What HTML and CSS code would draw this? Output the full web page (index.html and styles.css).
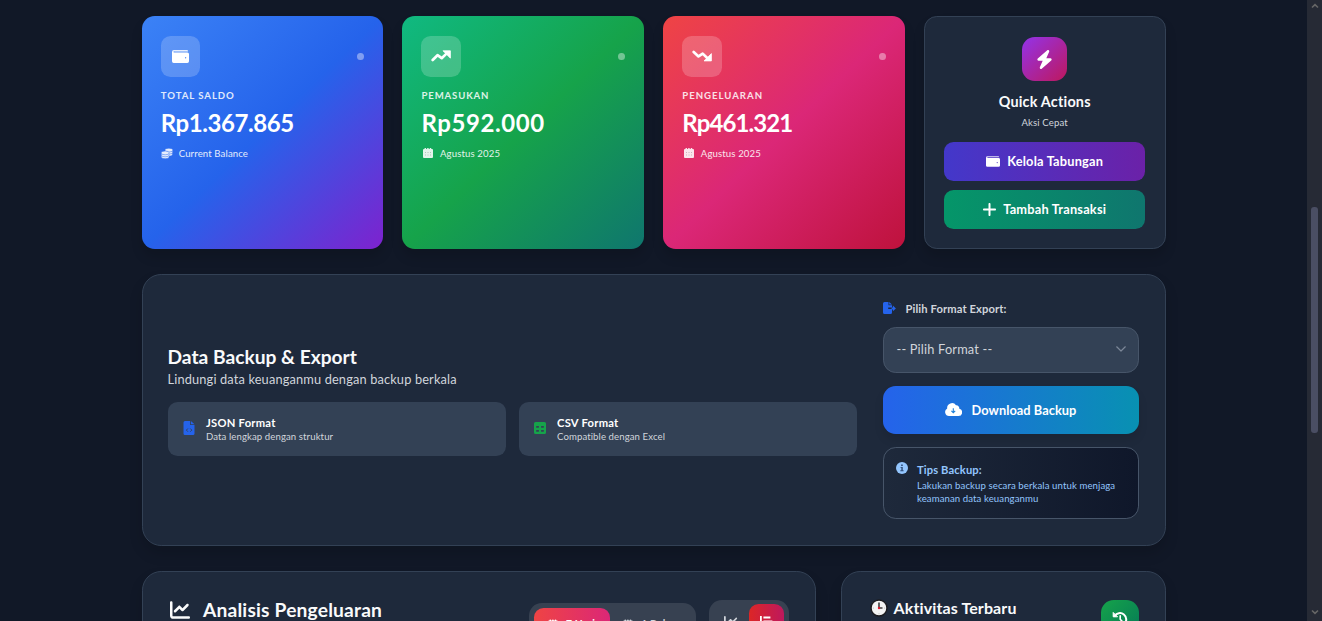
FILE: index.html
```
<!DOCTYPE html>
<html lang="id">
<head>
<meta charset="utf-8">
<title>Dashboard Keuangan</title>
<link rel="stylesheet" href="styles.css">
</head>
<body>
<svg class="defs" width="0" height="0">
  <symbol id="wallet" viewBox="0 0 17 13"><path opacity=".85" d="M1.8 0H15a1 1 0 0 1 1 1v.4H2.6A1 1 0 0 0 1.6 3H0V1.8A1.8 1.8 0 0 1 1.8 0z"/><path fill-rule="evenodd" d="M0 1.8 2 2.4H15.3A1.7 1.7 0 0 1 17 4.1v7.2a1.7 1.7 0 0 1-1.7 1.7H1.7A1.7 1.7 0 0 1 0 11.3zM13.6 7a.7.8 0 1 0 0 1.6.7.8 0 0 0 0-1.6z"/></symbol>
  <symbol id="calendar" viewBox="0 0 10 10"><path d="M1.500 1V.6a.8.7 0 0 1 1.600 0V1h1V.6a.8.7 0 0 1 1.600 0V1h1V.6a.8.7 0 0 1 1.600 0V1H9a1 1 0 0 1 1 1v7a1 1 0 0 1-1 1H1a1 1 0 0 1-1-1V2a1 1 0 0 1 1-1z"/><path fill="#000" opacity=".22" d="M2 4v1h1V4zm2.500 0v1h1V4zM7 4v1h1V4zM2 6.500v1h1v-1zm2.500 0v1h1v-1zM7 6.500v1h1v-1z"/></symbol>
  <symbol id="chart" viewBox="0 0 512 512"><path d="M64 64c0-17.7-14.3-32-32-32S0 46.3 0 64V400c0 44.2 35.8 80 80 80H480c17.7 0 32-14.3 32-32s-14.3-32-32-32H80c-8.8 0-16-7.2-16-16V64zm406.6 86.6c12.5-12.5 12.5-32.8 0-45.3s-32.8-12.5-45.3 0L320 210.7l-57.4-57.4c-12.5-12.5-32.8-12.5-45.3 0l-112 112c-12.5 12.5-12.5 32.8 0 45.3s32.8 12.5 45.3 0L240 221.3l57.4 57.4c12.5 12.5 32.8 12.5 45.3 0l128-128z"/></symbol>
</svg>

<main class="page">
  <section class="stats">
    <article class="stat blue">
      <div class="stat-top"><span class="tile"><svg width="17" height="13"><use href="#wallet"/></svg></span><i class="dot"></i></div>
      <div class="label">TOTAL SALDO</div>
      <div class="amount a1">Rp1.367.865</div>
      <div class="note"><svg width="12" height="11" viewBox="0 0 12 11"><g stroke="#2f6fee" stroke-width=".5"><ellipse cx="7.6" cy="6.3" rx="3.9" ry="1.9"/><ellipse cx="7.8" cy="4.2" rx="3.9" ry="1.9"/><ellipse cx="7.9" cy="2.1" rx="4" ry="1.9"/><ellipse cx="4.2" cy="8.8" rx="4" ry="1.9"/><ellipse cx="4.2" cy="6.9" rx="4" ry="1.9"/><ellipse cx="4.2" cy="4.9" rx="4" ry="1.9"/></g></svg>Current Balance</div>
    </article>
    <article class="stat green">
      <div class="stat-top"><span class="tile"><svg width="20" height="12" viewBox="0 0 20 12"><path d="M1.7 10 6.5 5.2 10.7 8.2 15.5 3.6" fill="none" stroke="currentColor" stroke-width="2.7" stroke-linecap="round" stroke-linejoin="round"/><path d="M12 .8h7.4v7.4z" stroke="currentColor" stroke-width=".8" stroke-linejoin="round"/></svg></span><i class="dot"></i></div>
      <div class="label l2">PEMASUKAN</div>
      <div class="amount a2">Rp592.000</div>
      <div class="note cal"><svg width="10" height="10"><use href="#calendar"/></svg>Agustus 2025</div>
    </article>
    <article class="stat red">
      <div class="stat-top"><span class="tile"><svg width="20" height="12" viewBox="0 0 20 12"><path d="M1.7 2 6.5 6.4 10.7 3.6 15.5 8.2" fill="none" stroke="currentColor" stroke-width="2.7" stroke-linecap="round" stroke-linejoin="round"/><path d="M12 10.9h7.4V3.6z" stroke="currentColor" stroke-width=".8" stroke-linejoin="round"/></svg></span><i class="dot"></i></div>
      <div class="label l3">PENGELUARAN</div>
      <div class="amount a3">Rp461.321</div>
      <div class="note cal"><svg width="10" height="10"><use href="#calendar"/></svg>Agustus 2025</div>
    </article>
    <article class="quick">
      <span class="bolt"><svg width="17" height="19" viewBox="16 0 416 512"><path d="M349.4 44.6c5.9-13.7 1.5-29.7-10.6-38.5s-28.6-8-39.9 1.8l-256 224C33 240.6 29.4 254.3 34 266.6s16.6 21.4 30 21.4H175.5L98.6 467.4c-5.9 13.7-1.5 29.7 10.6 38.5s28.6 8 39.9-1.8l256-224c10-8.8 13.6-22.4 8.9-34.9s-16.5-20.9-29.8-20.9H272.5L349.4 44.6z"/></svg></span>
      <h3>Quick Actions</h3>
      <p>Aksi Cepat</p>
      <button class="btn purple"><svg width="14" height="11"><use href="#wallet"/></svg>Kelola Tabungan</button>
      <button class="btn teal"><svg width="13" height="13" viewBox="16 48 416 416"><path d="M256 80c0-17.7-14.3-32-32-32s-32 14.3-32 32V224H48c-17.7 0-32 14.3-32 32s14.3 32 32 32H192V432c0 17.7 14.3 32 32 32s32-14.3 32-32V288H400c17.7 0 32-14.3 32-32s-14.3-32-32-32H256V80z"/></svg>Tambah Transaksi</button>
    </article>
  </section>

  <section class="panel export">
    <div class="info">
      <h2>Data Backup &amp; Export</h2>
      <p class="lead">Lindungi data keuanganmu dengan backup berkala</p>
      <div class="formats">
        <div class="format"><svg class="json" width="11" height="14" viewBox="0 0 11 14"><path d="M1.5 0H6.6V4H11v8.5a1.5 1.5 0 0 1-1.5 1.5h-8A1.5 1.5 0 0 1 0 12.500V1.500A1.500 1.500 0 0 1 1.500 0z"/><path d="M7.400 0 11 3.300H7.400z"/><path d="M4.400 7.500 2.900 9.100l1.500 1.600M6.800 7.500l1.500 1.600-1.500 1.600" fill="none" stroke="#334155" stroke-width=".9"/></svg><div><b>JSON Format</b><span>Data lengkap dengan struktur</span></div></div>
        <div class="format"><svg class="csv" width="12" height="12" viewBox="0 0 12 12"><path fill-rule="evenodd" d="M1.500 0h9A1.500 1.500 0 0 1 12 1.500v9a1.500 1.500 0 0 1-1.500 1.500h-9A1.500 1.500 0 0 1 0 10.500v-9A1.500 1.500 0 0 1 1.500 0zM2.200 4v1.700h2.700V4zm4.900 0v1.700h2.700V4zM2.200 8v1.800h2.700V8zm4.900 0v1.800h2.700V8z"/></svg><div><b>CSV Format</b><span>Compatible dengan Excel</span></div></div>
      </div>
    </div>
    <div class="side">
      <div class="pick"><svg width="13" height="12" viewBox="0 0 13 12"><path d="M1.500 0H5.500V3.200H9V5.400H5.200V7H9v3.500A1.500 1.500 0 0 1 7.500 12h-6A1.500 1.500 0 0 1 0 10.500v-9A1.500 1.500 0 0 1 1.500 0z"/><path d="M6.200 0 9 2.600H6.200zM8.600 5.400h1.300V3.600L12.900 6.500 9.900 9.200V7.500H8.600z"/></svg>Pilih Format Export:</div>
      <div class="select">-- Pilih Format --<svg width="10" height="6" viewBox="0 0 10 6"><path d="M.7.8 5 5 9.300.8" fill="none" stroke="#7c8798" stroke-width="1.200" stroke-linecap="round" stroke-linejoin="round"/></svg></div>
      <button class="download"><svg width="17" height="13" viewBox="0 0 17 13"><path d="M4 13A4 4 0 0 1 2.200 5.500 4.800 4.800 0 0 1 11 2.300 3 3 0 0 1 14.300 5.700 3.700 3.700 0 0 1 13.500 13z"/><path d="M8.300 5.200V9.300M6.400 7.800 8.300 9.700 10.200 7.800" stroke="#2080d8" stroke-width="1.100" fill="none"/></svg>Download Backup</button>
      <div class="tips">
        <svg width="12" height="12" viewBox="0 0 12 12"><circle cx="6" cy="6" r="6"/><path d="M5.100 2.500h1.700v1.400H5.100zM4.600 5h2.200v3.300h.8v1H4.300v-1h1V6h-.7z" fill="#33507c"/></svg>
        <div><b>Tips Backup:</b><p>Lakukan backup secara berkala untuk menjaga<br>keamanan data keuanganmu</p></div>
      </div>
    </div>
  </section>

  <section class="bottom">
    <div class="panel analysis">
      <h2><svg width="20" height="20"><use href="#chart"/></svg>Analisis Pengeluaran</h2>
      <div class="seg range"><span class="on"><svg width="10" height="11"><use href="#calendar"/></svg>7 Hari</span><span class="off"><svg width="10" height="11"><use href="#calendar"/></svg>1 Bulan</span></div>
      <div class="seg kind"><span class="off"><svg width="14" height="14"><use href="#chart"/></svg></span><span class="on"><svg width="13" height="14" viewBox="0 0 13 14"><path d="M0 1h1.800v12H0zM3.400 1.500h7v2h-7zM3.400 5.500h9v2h-9zM3.400 9.500h5v2h-5z"/></svg></span></div>
    </div>
    <div class="panel activity">
      <h3><svg width="18" height="18" viewBox="0 0 18 18"><circle cx="9" cy="9" r="8" fill="#f3f3f3" stroke="#1b1b1f" stroke-width="1.500"/><path d="M9 3.500V9" stroke="#222" stroke-width="1.400"/><path d="M9 9h3.500" stroke="#222" stroke-width="1.300"/><circle cx="9" cy="9" r="1.200" fill="#e0182d"/><g fill="#aaa"><circle cx="3.300" cy="9" r=".5"/><circle cx="14.700" cy="9" r=".5"/><circle cx="9" cy="14.700" r=".5"/></g></svg>Aktivitas Terbaru</h3>
      <span class="history"><svg width="16" height="16" viewBox="0 0 16 16"><g fill="none" stroke="currentColor" stroke-width="2" stroke-linecap="round" stroke-linejoin="round"><path d="M2.600 5A6.300 6.300 0 1 1 3 12.300"/><path d="M1.200 1.800V5.800H5.200z" fill="currentColor" stroke-width="1"/><path d="M8.200 4.800V8.300L10.400 10.500" stroke-width="1.600"/></g></svg></span>
    </div>
  </section>
</main>

<aside class="scrollbar">
  <svg width="8" height="6" viewBox="0 0 8 6"><path d="M1 4.500 4 1.700 7 4.500" fill="none" stroke="#666" stroke-width="1.700"/></svg>
  <i></i>
  <svg width="8" height="6" viewBox="0 0 8 6"><path d="M1 1.500 4 4.300 7 1.500" fill="none" stroke="#666" stroke-width="1.700"/></svg>
</aside>
</body>
</html>
```
FILE: styles.css
```
* { box-sizing: border-box; margin: 0; padding: 0; }
body {
  display: flex;
  height: 621px;
  overflow: hidden;
  background: #111827;
  color: #fff;
  font-family: Lato, "Open Sans", sans-serif;
  font-size: 12.8px;
  letter-spacing: .12px;
}
svg { fill: currentColor; flex: none; }
.defs { position: absolute; }
h2, h3, b, button { font-weight: 700; }
button { border: 0; color: #fff; font-family: inherit; font-size: 12.8px; }
.page { flex: 1; height: 621px; overflow: hidden; padding: 16px 141.5px 0; }

.stats { display: grid; grid-template-columns: repeat(4, 1fr); gap: 19.2px; height: 233px; }
.stat { border-radius: 12.8px; padding: 20px 19.2px; box-shadow: 0 8px 12px rgba(0, 0, 0, .14); }
.blue { background: linear-gradient(to bottom right, #3b82f6, #2563eb 50%, #7e22ce); }
.green { background: linear-gradient(to bottom right, #10b981, #16a34a 50%, #0f766e); }
.red { background: linear-gradient(to bottom right, #ef4444, #db2777 50%, #be123c); }
.stat-top { display: flex; align-items: center; justify-content: space-between; height: 41px; }
.tile { display: flex; align-items: center; justify-content: center; width: 39.5px; height: 41px; border-radius: 9.6px; background: rgba(255, 255, 255, .2); }
.tile svg { margin-top: -1px; }
.dot { width: 6.5px; height: 7px; border-radius: 50%; background: rgba(255, 255, 255, .4); }
.label { margin-top: 12px; line-height: 13px; font-size: 9.6px; font-weight: 700; letter-spacing: .95px; opacity: .85; }
.l2 { letter-spacing: .85px; }
.l3 { letter-spacing: .98px; }
.amount { margin-top: 6px; line-height: 29px; font-size: 24px; font-weight: 700; white-space: nowrap; }
.a1 { letter-spacing: -.42px; }
.a2 { letter-spacing: .58px; }
.a3 { letter-spacing: -.9px; }
.note { display: flex; align-items: center; gap: 6px; margin-top: 10px; line-height: 13px; font-size: 9.6px; opacity: .88; }
.note.cal { padding-left: 1.5px; gap: 7px; }
.note.cal svg { margin-top: -1px; }

.quick { display: flex; flex-direction: column; align-items: center; padding: 20px 19.2px 0; border: 1px solid #334155; border-radius: 12.8px; background: #1e293b; box-shadow: 0 8px 12px rgba(0, 0, 0, .14); }
.bolt { display: flex; align-items: center; justify-content: center; width: 45px; height: 44px; border-radius: 12.8px; background: linear-gradient(to bottom right, #9333ea, #be185d); }
.quick h3 { margin-top: 11px; line-height: 20px; font-size: 14.4px; letter-spacing: .2px; color: #f9fafb; }
.quick p { margin-top: 4px; line-height: 13px; font-size: 9.6px; color: #d1d5db; }
.btn { display: flex; align-items: center; justify-content: center; gap: 7px; width: 100%; height: 39px; flex: none; padding-bottom: 1px; border-radius: 9.6px; letter-spacing: .2px; }
.purple { margin-top: 13px; background: linear-gradient(to right, #4338ca, #6b21a8); }
.teal { margin-top: 9px; background: linear-gradient(to right, #059669, #0f766e); }

.panel { background: #1e293b; border: 1px solid #334155; box-shadow: 0 8px 14px rgba(0, 0, 0, .14); }
.export { display: flex; align-items: center; gap: 26px; height: 272px; margin-top: 25px; padding: 0 26px 0 25px; border-radius: 19.2px; }
.info { flex: 1; margin-bottom: 20px; }
h2 { font-size: 19.2px; line-height: 26px; color: #f9fafb; letter-spacing: 0; }
.lead { line-height: 19px; color: #d1d5db; letter-spacing: .145px; }
.formats { display: grid; grid-template-columns: 1fr 1fr; gap: 13px; margin-top: 13px; }
.format { display: flex; align-items: center; gap: 11.5px; height: 54px; padding-left: 15px; border-radius: 9.6px; background: #334155; }
.format svg { width: 12px; margin-top: -2px; }
.format b { display: block; line-height: 14px; font-size: 11.2px; letter-spacing: .25px; }
.format span { display: block; line-height: 13px; font-size: 9.6px; letter-spacing: .09px; color: #d1d5db; }
.json { color: #2563eb; }
.csv { color: #16a34a; }
.side { width: 256px; margin-bottom: 2px; }
.pick { display: flex; align-items: center; gap: 10px; height: 17px; font-size: 11.2px; font-weight: 700; color: #d1d5db; letter-spacing: .1px; }
.pick svg { color: #2563eb; }
.select { display: flex; align-items: center; justify-content: space-between; height: 46px; margin-top: 10px; padding: 0 12px 1px 13px; border: 1px solid #475569; border-radius: 12.8px; background: #334155; color: #d1d5db; letter-spacing: .17px; }
.download { display: flex; align-items: center; justify-content: center; gap: 10px; width: 100%; height: 48px; margin-top: 13px; border-radius: 12.8px; background: linear-gradient(to right, #2563eb, #0891b2); box-shadow: 0 6px 10px rgba(0, 0, 0, .1); letter-spacing: .05px; }
.tips { display: flex; gap: 9px; height: 72px; margin-top: 13px; padding: 14px 12.5px; border: 1px solid #475569; border-radius: 12.8px; background: linear-gradient(to right, #1e293b, #0f172a); color: #93c5fd; }
.tips b { display: block; line-height: 15px; font-size: 11.2px; }
.tips p { margin-top: 2px; line-height: 13px; font-size: 9.6px; letter-spacing: .09px; white-space: nowrap; }

.bottom { display: grid; grid-template-columns: 674px 325px; gap: 25px; margin-top: 25px; }
.bottom .panel { display: flex; align-items: flex-start; height: 120px; padding: 28px 26px 0; border-radius: 19.2px; }
.analysis h2 { display: flex; align-items: center; gap: 13.5px; flex: 1; margin: -1px 0 0 1px; line-height: 21px; letter-spacing: .18px; }
.seg { display: flex; border-radius: 12.8px; background: #374151; font-size: 10.4px; font-weight: 700; }
.seg span { display: flex; align-items: center; justify-content: center; gap: 8px; border-radius: 9.6px; }
.off { color: #d1d5db; }
.range { width: 167px; height: 42px; margin-top: 3px; padding: 5px; }
.range .on { width: 76px; height: 32px; background: linear-gradient(to right, #ef4444, #db2777); }
.range .off { width: 81px; height: 32px; }
.kind { width: 80px; height: 44px; margin-left: 13px; padding: 4px 5px; }
.kind .on, .kind .off { width: 35px; height: 36px; }
.kind .on { background: linear-gradient(to right, #dc2626, #be185d); }
.activity h3 { display: flex; align-items: center; gap: 6px; flex: 1; margin: -2px 0 0 2px; line-height: 20px; font-size: 16px; color: #f9fafb; letter-spacing: .12px; }
.history { display: flex; align-items: center; justify-content: center; width: 38px; height: 38px; border-radius: 12.8px; background: linear-gradient(to bottom right, #16a34a, #047857); }

.scrollbar { display: flex; flex-direction: column; align-items: center; width: 15px; height: 621px; padding: 3px 0 6px; background: #262a35; }
.scrollbar i { width: 7px; height: 226px; margin: 198px 0 auto; border-radius: 3px; background: #4a4e63; }
```
